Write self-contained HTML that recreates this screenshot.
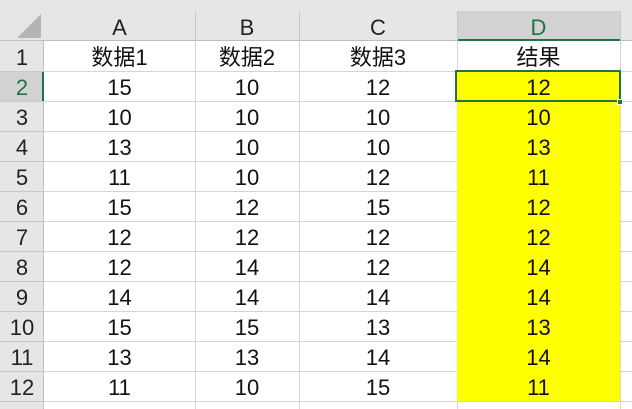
<!DOCTYPE html>
<html><head><meta charset="utf-8"><style>
html,body{margin:0;padding:0;width:632px;height:409px;overflow:hidden;background:#fff;font-family:"Liberation Sans","Noto Sans CJK SC",sans-serif;}
.a{position:absolute;box-sizing:border-box;}
.c{position:absolute;box-sizing:border-box;text-align:center;font-size:22px;line-height:30px;padding-top:2px;color:#111;}
</style></head><body>
<div class="a" style="left:0;top:0;width:632px;height:41px;background:#e6e6e6;border-bottom:1px solid #bdbdbd"></div>
<div class="a" style="left:0;top:41px;width:44px;height:368px;background:#e6e6e6;border-right:1px solid #bdbdbd"></div>
<svg class="a" style="left:0;top:0" width="44" height="41"><polygon points="17,38 41,38 41,14" fill="#b4b4b4"/></svg>
<div class="a" style="left:457px;top:11px;width:163px;height:30px;background:#d2d2d2;border-bottom:2px solid #217346"></div>
<div class="a" style="left:0;top:71px;width:44px;height:30px;background:#d2d2d2;border-right:2px solid #217346"></div>
<div id="g"></div>
<div class="a" style="left:455px;top:70px;width:166px;height:32px;border:2px solid #217346"></div>
<div class="a" style="left:617px;top:99px;width:6px;height:6px;background:#217346;border:1px solid #fff"></div>
<script>
var cols=[44,195,299,457,620];
var h='';
for(var i=1;i<cols.length;i++){var x=cols[i];h+='<div class="a" style="left:'+x+'px;top:11px;width:1px;height:30px;background:#c8c8c8"></div>';h+='<div class="a" style="left:'+x+'px;top:41px;width:1px;height:368px;background:#d4d4d4"></div>';}
for(var r=0;r<12;r++){var y=71+r*30;h+='<div class="a" style="left:0;top:'+y+'px;width:44px;height:1px;background:#c8c8c8"></div>';h+='<div class="a" style="left:44px;top:'+y+'px;width:588px;height:1px;background:#d4d4d4"></div>';}
h+='<div class="a" style="left:0;top:401px;width:44px;height:1px;background:#c8c8c8"></div><div class="a" style="left:44px;top:401px;width:588px;height:1px;background:#d4d4d4"></div>';
h+='<div class="a" style="left:457px;top:72px;width:163px;height:329px;background:#ffff00"></div>';
var L=['A','B','C','D'];
for(var i=0;i<4;i++){h+='<div class="c" style="left:'+cols[i]+'px;top:11px;width:'+(cols[i+1]-cols[i])+'px;height:30px;color:'+(i==3?'#217346':'#222')+'">'+L[i]+'</div>';}
var d=[['数据1','数据2','数据3','结果'],[15,10,12,12],[10,10,10,10],[13,10,10,13],[11,10,12,11],[15,12,15,12],[12,12,12,12],[12,14,12,14],[14,14,14,14],[15,15,13,13],[13,13,14,14],[11,10,15,11]];
for(var r=0;r<12;r++){var y=41+r*30;
h+='<div class="c" style="left:0;top:'+y+'px;width:44px;height:30px;color:'+(r==1?'#217346':'#222')+'">'+(r+1)+'</div>';
for(var i=0;i<4;i++){h+='<div class="c" style="left:'+cols[i]+'px;top:'+y+'px;width:'+(cols[i+1]-cols[i])+'px;height:30px">'+d[r][i]+'</div>';}}
document.getElementById('g').innerHTML=h;
</script>
</body></html>
